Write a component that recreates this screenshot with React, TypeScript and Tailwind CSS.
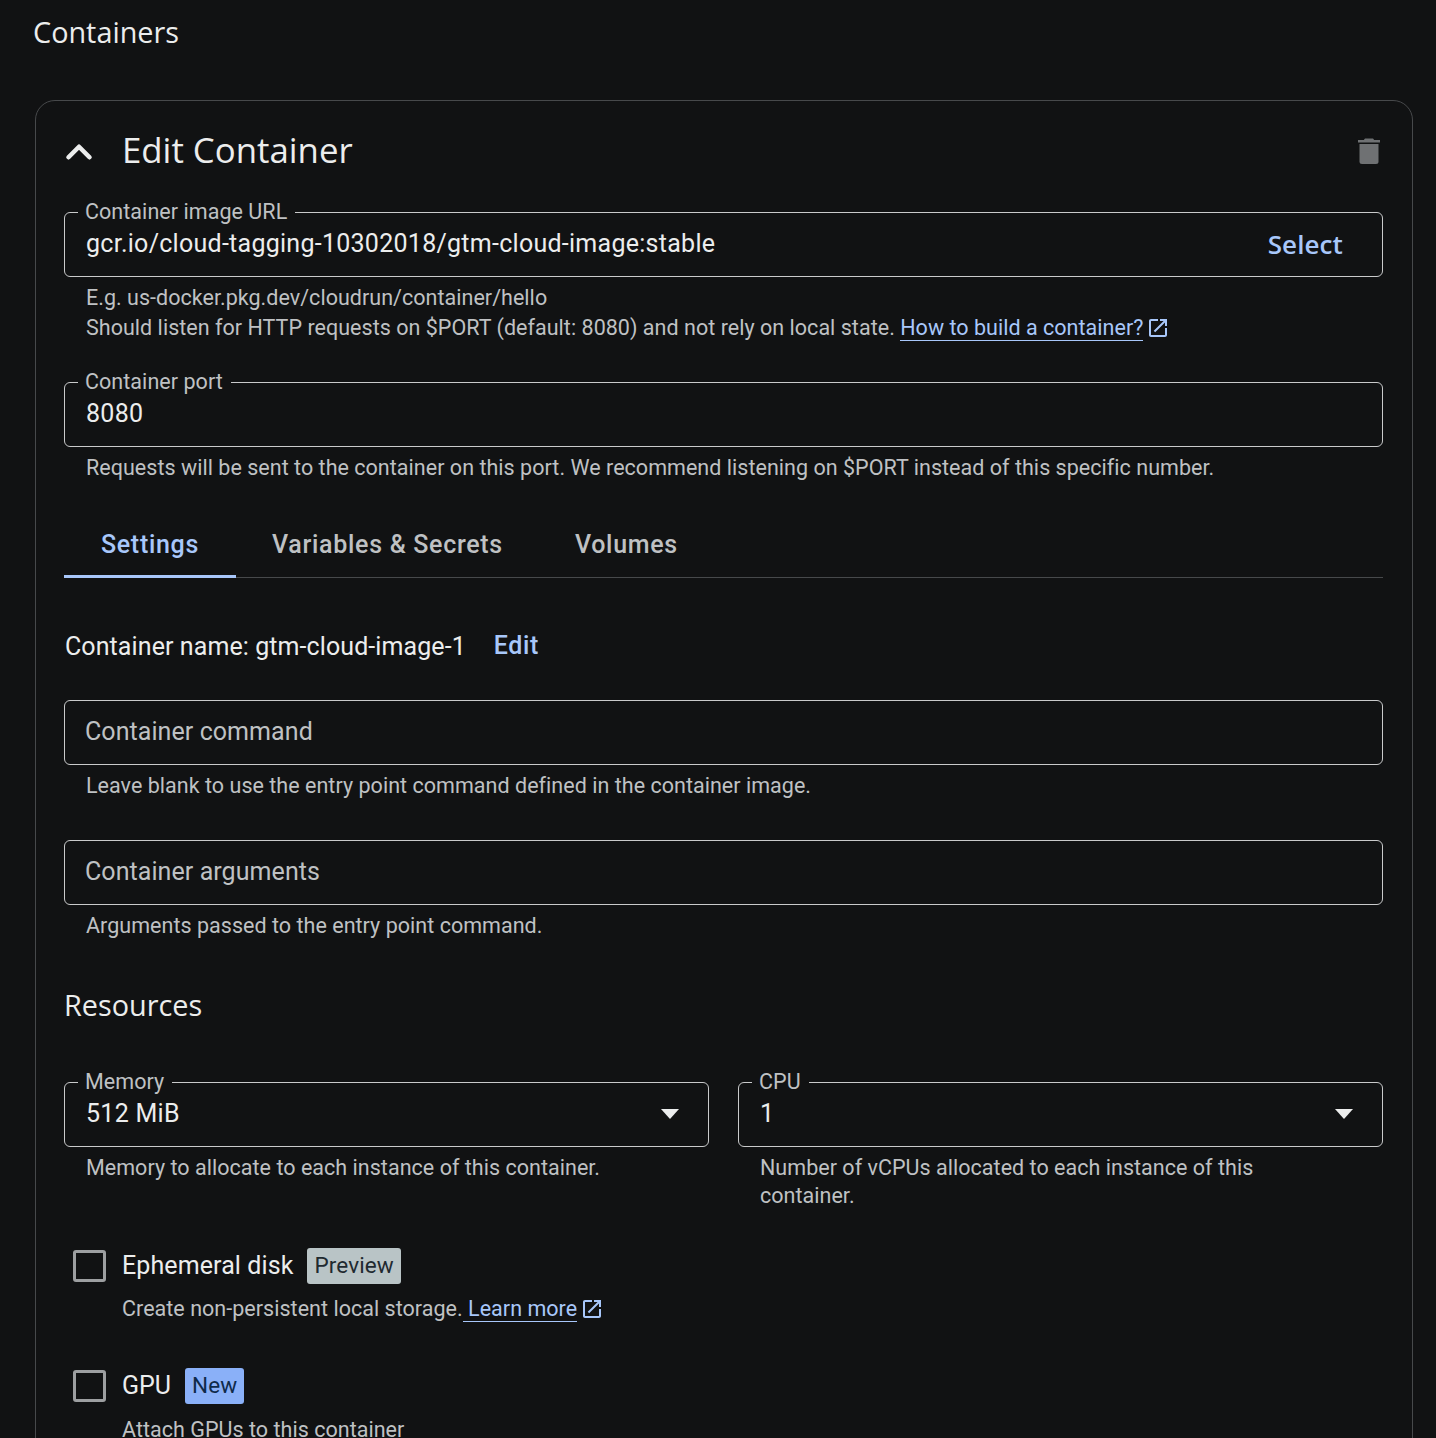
import React from "react";
import { ChevronUp } from "lucide-react";

const heading = "font-['Open_Sans','Noto_Sans',sans-serif]";

function Field({ label, value, placeholder, right, caret, className = "" }: { label?: string; value?: string; placeholder?: string; right?: React.ReactNode; caret?: boolean; className?: string }) {
  return (
    <div className={`relative h-[65px] rounded-[6px] border border-[#c9cacb] flex items-center justify-between pl-[20px] pr-[39px] ${className}`}>
      {label && (
        <span className="absolute top-[-15.5px] left-[13px] bg-[#111213] pl-[7px] pr-[8px] text-[21.5px] leading-[28px] tracking-[0.05px] text-[#bfc1c3]">{label}</span>
      )}
      {value && <span className="relative top-[-1px] left-[1px] text-[25px] tracking-[0.27px] text-[#eceded]">{value}</span>}
      {placeholder && <span className="relative top-[-1px] text-[25px] tracking-[0.07px] text-[#bfc1c3]">{placeholder}</span>}
      {right}
      {caret && (
        <svg className="absolute right-[29px] top-[26px]" width="18" height="10" viewBox="0 0 18 10"><path d="M0 0h18L9 10z" fill="#eceded" /></svg>
      )}
    </div>
  );
}

function Help({ children, className = "" }: { children: React.ReactNode; className?: string }) {
  return <div className={`pl-[22px] text-[21.5px] leading-[30px] tracking-[0.03px] text-[#bfc1c3] ${className}`}>{children}</div>;
}

function Ext() {
  return (
    <svg className="inline-block ml-[3px] align-[-5px]" width="24" height="24" viewBox="0 0 24 24" fill="#a8c7fa">
      <path d="M19 19H5V5h7V3H5c-1.110 0-2 .900-2 2v14c0 1.100.890 2 2 2h14c1.100 0 2-.900 2-2v-7h-2v7zM14 3v2h3.590l-9.830 9.830 1.410 1.410L19 6.410V10h2V3h-7z" />
    </svg>
  );
}

export default function App() {
  return (
    <div className="h-[1438px] overflow-hidden bg-[#111213] font-['Roboto',sans-serif]">
      <h2 className={`pl-[33px] pt-[11.5px] text-[28.8px] leading-[40px] font-medium text-[#eceded] ${heading}`}>Containers</h2>
      <div className="ml-[35px] mr-[23px] mt-[48.5px] h-[1400px] rounded-[20px] border border-[#47494b] pl-[28px] pr-[29px]">
        <div className="flex items-center justify-between h-[111px] pb-[12px]">
          <div className="flex items-center">
            <ChevronUp className="relative top-[1px] ml-[-6px] text-[#eceded]" size={42} strokeWidth={2.6} />
            <span className={`relative top-[-1px] ml-[22px] text-[34.8px] leading-[48px] text-[#eceded] ${heading}`}>Edit Container</span>
          </div>
          <svg className="mr-[2px] mt-[-2px]" width="24" height="28" viewBox="0 0 24 28" fill="#6f7173">
            <path d="M8 2.500h8l1.200 1.500H23v2.600H1V4h5.800z" />
            <path d="M2.500 8h19v17.500a2.500 2.500 0 0 1-2.500 2.500H5a2.500 2.500 0 0 1-2.500-2.500z" />
          </svg>
        </div>

        <Field label="Container image URL" value="gcr.io/cloud-tagging-10302018/gtm-cloud-image:stable"
          right={<span className={`text-[26px] tracking-[0.1px] font-semibold text-[#a8c7fa] ${heading}`}>Select</span>} />
        <Help className="mt-[6px]">
          <div>E.g. us-docker.pkg.dev/cloudrun/container/hello</div>
          <div>
            Should listen for HTTP requests on $PORT (default: 8080) and not rely on local state.{" "}
            <a className="text-[#a8c7fa] border-b border-[#a8c7fa]">How to build a container?</a>
            <Ext />
          </div>
        </Help>

        <Field className="mt-[39px]" label="Container port" value="8080" />
        <Help className="mt-[6px]">Requests will be sent to the container on this port. We recommend listening on $PORT instead of this specific number.</Help>

        <div className="mt-[34px] flex h-[61px] border-b border-[#47494b]">
          <div className="w-[172px] h-[61px] flex items-center justify-center pb-[2px] border-b-[3px] border-[#a8c7fa] text-[25px] font-medium tracking-[0.7px] text-[#a8c7fa]">Settings</div>
          <div className="ml-[36px] flex items-center pb-[4px] text-[25px] font-medium tracking-[0.7px] text-[#bfc1c3]">Variables &amp; Secrets</div>
          <div className="ml-[72px] flex items-center pb-[4px] text-[25px] font-medium tracking-[0.7px] text-[#bfc1c3]">Volumes</div>
        </div>

        <div className="mt-[51px] ml-[1px] flex items-center h-[36px] text-[25px] text-[#eceded]">
          <span className="tracking-[0.09px]">Container name: gtm-cloud-image-1</span>
          <span className="ml-[28px] relative top-[-1px] font-medium tracking-[0.6px] text-[#a8c7fa]">Edit</span>
        </div>

        <Field className="mt-[35px]" placeholder="Container command" />
        <Help className="mt-[6px]">Leave blank to use the entry point command defined in the container image.</Help>

        <Field className="mt-[39px]" placeholder="Container arguments" />
        <Help className="mt-[6px]">Arguments passed to the entry point command.</Help>

        <h3 className={`mt-[43.5px] text-[28.8px] leading-[40px] font-medium text-[#eceded] ${heading}`}>Resources</h3>

        <div className="mt-[57.5px] grid grid-cols-2 gap-x-[29px]">
          <div>
            <Field label="Memory" value="512 MiB" caret />
            <Help className="mt-[6px] pr-[100px]">Memory to allocate to each instance of this container.</Help>
          </div>
          <div>
            <Field label="CPU" value="1" caret />
            <div className="mt-[7px] pl-[22px] pr-[100px] text-[21.5px] leading-[28px] tracking-[0.03px] text-[#bfc1c3]">Number of vCPUs allocated to each instance of this container.</div>
          </div>
        </div>

        <div className="mt-[38px] flex items-center h-[36px]">
          <div className="ml-[9px] w-[33px] h-[32px] rounded-[3px] border-[3px] border-[#9d9fa1]" />
          <span className="ml-[16px] text-[25px] tracking-[0.1px] text-[#eceded]">Ephemeral disk</span>
          <span className="ml-[14px] h-[36px] px-[7px] flex items-center rounded-[3px] bg-[#b9c4c6] text-[22.5px] tracking-[0.1px] text-[#1f2a30]">Preview</span>
        </div>
        <div className="mt-[10px] pl-[58px] text-[21.5px] leading-[30px] tracking-[0.03px] text-[#bfc1c3]">
          Create non-persistent local storage.
          <a className="text-[#a8c7fa] border-b border-[#a8c7fa]"> Learn more</a>
          <Ext />
        </div>

        <div className="mt-[44px] flex items-center h-[36px]">
          <div className="ml-[9px] w-[33px] h-[32px] rounded-[3px] border-[3px] border-[#9d9fa1]" />
          <span className="ml-[16px] text-[25px] text-[#eceded]">GPU</span>
          <span className="ml-[14px] h-[36px] px-[7px] flex items-center rounded-[3px] bg-[#8ab0f8] text-[22.5px] tracking-[0.1px] text-[#0f2a4a]">New</span>
        </div>
        <div className="mt-[11px] pl-[58px] text-[21.5px] leading-[30px] tracking-[0.03px] text-[#bfc1c3]">Attach GPUs to this container</div>
      </div>
    </div>
  );
}
